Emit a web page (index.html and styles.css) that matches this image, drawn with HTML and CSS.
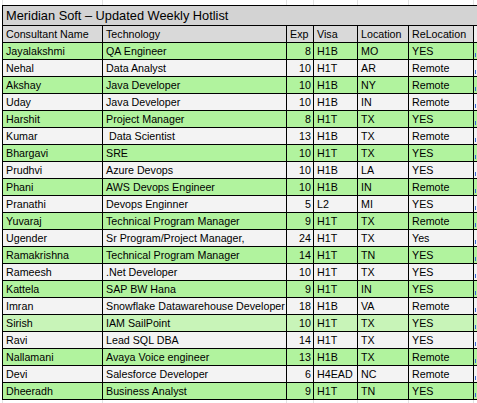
FILE: index.html
```html
<!DOCTYPE html>
<html>
<head>
<meta charset="utf-8">
<link rel="stylesheet" href="styles.css">
</head>
<body>
<div class="grid grid-top">
  <span class="g c1"></span><span class="g c2"></span><span class="g c3"></span><span class="g c4"></span><span class="g c5"></span><span class="g c6"></span>
</div>
<table class="sheet">
  <colgroup>
    <col class="w1"><col class="w2"><col class="w3"><col class="w4"><col class="w5"><col class="w6"><col class="w7">
  </colgroup>
  <tr class="title"><td colspan="7">Meridian Soft – Updated Weekly Hotlist</td></tr>
  <tr class="head"><td>Consultant Name</td><td>Technology</td><td>Exp</td><td>Visa</td><td>Location</td><td>ReLocation</td><td class="ext"></td></tr>
  <tr class="gr"><td>Jayalakshmi</td><td>QA Engineer</td><td class="num">8</td><td>H1B</td><td>MO</td><td>YES</td><td class="ext lk"></td></tr>
  <tr class="wh"><td>Nehal</td><td>Data Analyst</td><td class="num">10</td><td>H1T</td><td>AR</td><td>Remote</td><td class="ext lk"></td></tr>
  <tr class="gr"><td>Akshay</td><td>Java Developer</td><td class="num">10</td><td>H1B</td><td>NY</td><td>Remote</td><td class="ext lk"></td></tr>
  <tr class="wh"><td>Uday</td><td>Java Developer</td><td class="num">10</td><td>H1B</td><td>IN</td><td>Remote</td><td class="ext lk"></td></tr>
  <tr class="gr"><td>Harshit</td><td>Project Manager</td><td class="num">8</td><td>H1T</td><td>TX</td><td>YES</td><td class="ext lk"></td></tr>
  <tr class="wh"><td>Kumar</td><td>&nbsp;Data Scientist</td><td class="num">13</td><td>H1B</td><td>TX</td><td>Remote</td><td class="ext lk"></td></tr>
  <tr class="gr"><td>Bhargavi</td><td>SRE</td><td class="num">10</td><td>H1T</td><td>TX</td><td>YES</td><td class="ext lk"></td></tr>
  <tr class="wh"><td>Prudhvi</td><td>Azure Devops</td><td class="num">10</td><td>H1B</td><td>LA</td><td>YES</td><td class="ext lk"></td></tr>
  <tr class="gr"><td>Phani</td><td>AWS Devops Engineer</td><td class="num">10</td><td>H1B</td><td>IN</td><td>Remote</td><td class="ext lk"></td></tr>
  <tr class="wh"><td>Pranathi</td><td>Devops Enginner</td><td class="num">5</td><td>L2</td><td>MI</td><td>YES</td><td class="ext lk"></td></tr>
  <tr class="gr"><td>Yuvaraj</td><td>Technical Program Manager</td><td class="num">9</td><td>H1T</td><td>TX</td><td>Remote</td><td class="ext lk"></td></tr>
  <tr class="wh"><td>Ugender</td><td>Sr Program/Project Manager,</td><td class="num">24</td><td>H1T</td><td>TX</td><td>Yes</td><td class="ext lk"></td></tr>
  <tr class="gr"><td>Ramakrishna</td><td>Technical Program Manager</td><td class="num">14</td><td>H1T</td><td>TN</td><td>YES</td><td class="ext lk"></td></tr>
  <tr class="wh"><td>Rameesh</td><td>.Net Developer</td><td class="num">10</td><td>H1T</td><td>TX</td><td>YES</td><td class="ext lk"></td></tr>
  <tr class="gr"><td>Kattela</td><td>SAP BW Hana</td><td class="num">9</td><td>H1T</td><td>IN</td><td>YES</td><td class="ext lk"></td></tr>
  <tr class="wh"><td>Imran</td><td>Snowflake Datawarehouse Developer</td><td class="num">18</td><td>H1B</td><td>VA</td><td>Remote</td><td class="ext lk"></td></tr>
  <tr class="lg"><td>Sirish</td><td>IAM SailPoint</td><td class="num">10</td><td>H1T</td><td>TX</td><td>YES</td><td class="ext lk"></td></tr>
  <tr class="wh"><td>Ravi</td><td>Lead SQL DBA</td><td class="num">14</td><td>H1T</td><td>TX</td><td>YES</td><td class="ext lk"></td></tr>
  <tr class="gr"><td>Nallamani</td><td>Avaya Voice engineer</td><td class="num">13</td><td>H1B</td><td>TX</td><td>Remote</td><td class="ext lk"></td></tr>
  <tr class="wh"><td>Devi</td><td>Salesforce Developer</td><td class="num">6</td><td>H4EAD</td><td>NC</td><td>Remote</td><td class="ext lk"></td></tr>
  <tr class="gr"><td>Dheeradh</td><td>Business Analyst</td><td class="num">9</td><td>H1T</td><td>TN</td><td>YES</td><td class="ext lk"></td></tr>
</table>
<div class="grid grid-bottom">
  <span class="g c1"></span><span class="g c2"></span><span class="g c3"></span><span class="g c4"></span><span class="g c5"></span><span class="g c6"></span>
</div>
</body>
</html>
```
FILE: styles.css
```css
html, body {
  margin: 0;
  padding: 0;
  background: #ffffff;
  overflow: hidden;
}
body {
  width: 477px;
  height: 403px;
  font-family: "Liberation Sans", Arial, sans-serif;
  color: #000;
}
.grid {
  display: flex;
  padding-left: 2px;
  width: 475px;
}
.grid-top { height: 5px; }
.grid-bottom { height: 5px; }
.g {
  display: block;
  flex: none;
  border-right: 1px solid #e2e2e2;
  box-sizing: border-box;
}
.c1 { width: 101px; border-left: 1px solid #e2e2e2; }
.c2 { width: 184px; }
.c3 { width: 27px; }
.c4 { width: 44px; }
.c5 { width: 51px; }
.c6 { width: 65px; }

.sheet {
  border-collapse: collapse;
  table-layout: fixed;
  width: 475px;
  margin-left: 2px;
  font-size: 10.7px;
}
.w1 { width: 100px; }
.w2 { width: 184px; }
.w3 { width: 27px; }
.w4 { width: 44px; }
.w5 { width: 51px; }
.w6 { width: 65px; }
.w7 { width: 4px; }

.sheet td {
  border: 1px solid #000;
  height: 16px;
  padding: 0 3px;
  line-height: 16px;
  white-space: nowrap;
  overflow: hidden;
  box-sizing: border-box;
}
.sheet td.num {
  text-align: right;
  padding-right: 2px;
}
.title td {
  height: 19px;
  font-size: 12.8px;
  line-height: 19px;
  background: #d3d3d3;
  border-right: none;
}
.head td { background: #d9d9d9; }
.head td.ext { background: #efefef; }
.gr td { background: #b1f39e; }
.lg td { background: #c8f4b8; }
.wh td { background: #f3f3f3; }
.sheet td.ext {
  border-right: none;
  padding: 0 0 0 1px;
}
.lk::before {
  content: "";
  display: inline-block;
  width: 1px;
  height: 4px;
  background: #3a67d6;
  vertical-align: -2px;
}
```
